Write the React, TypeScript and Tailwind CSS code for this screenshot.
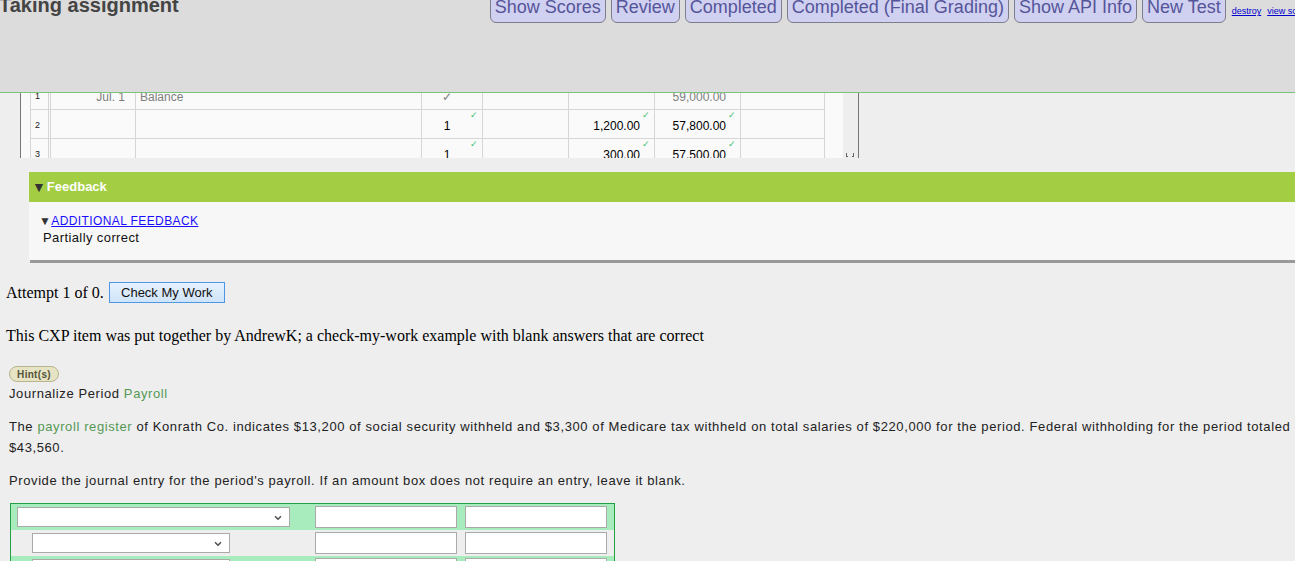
import { ChevronDown } from 'lucide-react';

const sans = 'font-["Liberation_Sans",Arial,sans-serif]';
const serif = 'font-["Liberation_Serif","Times_New_Roman",serif]';
const cellFont = 'font-["Liberation_Sans_Narrow","Liberation_Sans",Arial,sans-serif]';

const navButtons = ['Show Scores', 'Review', 'Completed', 'Completed (Final Grading)', 'Show API Info', 'New Test'];

type Row = {
    n: string;
    date?: string;
    desc?: string;
    post?: string;
    debit?: string;
    credit?: string;
    bal?: string;
    old?: boolean;
};

const ledgerRows: Row[] = [
    { n: '1', date: 'Jul. 1', desc: 'Balance', post: '✓', bal: '59,000.00', old: true },
    { n: '2', post: '1', credit: '1,200.00', bal: '57,800.00' },
    { n: '3', post: '1', credit: '300.00', bal: '57,500.00' },
];

const Tick = () => (
    <span className="absolute right-[4px] top-[1px] text-[9px] leading-none text-[#3cc070]">✓</span>
);

const Cell = ({ w, children, className = '' }: { w: string; children?: React.ReactNode; className?: string }) => (
    <div className={`relative ${w} h-[29px] pt-[3px] shrink-0 border-r border-b border-[#d6d6d6] flex items-center ${className}`}>
        {children}
    </div>
);

const LedgerRow = ({ r }: { r: Row }) => {
    const txt = r.old ? 'text-[#7e7e7e]' : 'text-black';
    return (
        <div className={`flex ${cellFont} text-[12px] ${txt}`}>
            <div className="w-[9px] h-[29px] shrink-0" />
            <Cell w="w-[19px]" className="border-l pl-[4px] text-[9px] text-[#222]">{r.n}</Cell>
            <div className="w-[1px] h-[29px] shrink-0 border-b border-[#d6d6d6]" />
            <Cell w="w-[86px]" className="border-l justify-end pr-[10px]">{r.date}</Cell>
            <Cell w="w-[286px]" className="pl-[4px]">{r.desc}</Cell>
            <Cell w="w-[61px]" className="justify-center pr-[10px]">
                {r.post}
                {!r.old && <Tick />}
            </Cell>
            <Cell w="w-[86px]" className="justify-end pr-[14px]">{r.debit}</Cell>
            <Cell w="w-[86px]" className="justify-end pr-[14px]">
                {r.credit}
                {r.credit && <Tick />}
            </Cell>
            <Cell w="w-[86px]" className="justify-end pr-[14px]">
                {r.bal}
                {!r.old && <Tick />}
            </Cell>
            <Cell w="w-[84px]" />
        </div>
    );
};

const FakeSelect = ({ w }: { w: string }) => (
    <div className={`relative ${w} h-[20px] bg-white border border-[#aaa]`}>
        <ChevronDown className="absolute right-[6px] top-[5px] h-[10px] w-[10px] text-[#555]" strokeWidth={4} />
    </div>
);

const Box = () => <div className="w-[142px] h-[22px] bg-white border border-[#aaa] shrink-0" />;

const EntryRow = ({ green, indent }: { green: boolean; indent: boolean }) => (
    <div className={`flex items-center h-[26px] ${green ? 'bg-[#a8ecbe]' : 'bg-[#eeeeee]'}`}>
        <div className={`w-[304px] shrink-0 ${indent ? 'pl-[21px]' : 'pl-[6px]'}`}>
            <FakeSelect w={indent ? 'w-[198px]' : 'w-[273px]'} />
        </div>
        <Box />
        <div className="w-[8px] shrink-0" />
        <Box />
    </div>
);

const App = () => {
    return (
        <div className={`min-h-screen bg-[#eeeeee] ${sans} overflow-hidden`}>
            {/* top bar */}
            <div className="h-[93px] bg-[#dcdcdc] border-b border-[#7cc47e] flex items-start overflow-hidden whitespace-nowrap">
                <h1 className="mt-[-10px] ml-[-1px] shrink-0 text-[20px] font-bold text-[#444]">Taking assignment</h1>
                <div className="ml-[311px] flex items-start gap-[5px] shrink-0">
                    {navButtons.map((b) => (
                        <div
                            key={b}
                            className="mt-[-8px] h-[31px] pt-[4px] px-[4px] shrink-0 bg-[#d0d0f0] border border-[#7d7d8c] rounded-b-[6px] text-[18px] leading-[21px] text-[#55559a]"
                        >
                            {b}
                        </div>
                    ))}
                    <a className="ml-[1px] mt-[5px] text-[9px] text-[#0000cc] underline">destroy</a>
                    <a className="ml-[1px] mt-[5px] text-[9px] text-[#0000cc] underline">view source</a>
                </div>
            </div>

            {/* scrolled ledger */}
            <div className="ml-[20px] w-[839px] h-[65px] border-l border-r border-[#777] bg-[#fafafa] flex overflow-hidden">
                <div className="w-[822px] shrink-0">
                    <div className="mt-[-12px]">
                        {ledgerRows.map((r) => (
                            <LedgerRow key={r.n} r={r} />
                        ))}
                    </div>
                </div>
                <div className="w-[15px] shrink-0 bg-[#eeeeee] flex items-end justify-center">
                    <svg width="9" height="4" viewBox="0 0 9 4" className="mb-[1px]">
                        <rect x="0" y="0" width="1" height="3" fill="#666" />
                        <rect x="0" y="3" width="2" height="1" fill="#666" />
                        <rect x="7" y="0" width="1" height="3" fill="#666" />
                        <rect x="6" y="3" width="2" height="1" fill="#666" />
                    </svg>
                </div>
            </div>

            {/* feedback */}
            <div className="mt-[14px] ml-[29px] shadow-[1px_3px_0_#999]">
                <div className="h-[30px] bg-[#a3cd43] flex items-center pl-[3px] text-[13px] font-bold text-white">
                    <span className="text-[14px] leading-none text-[#333] mr-[1px]">▼</span>Feedback
                </div>
                <div className="h-[58px] bg-[#f7f7f7] pt-[10px] pl-[10px] text-[13px] tracking-[0.4px]">
                    <div className="flex items-center h-[17px]">
                        <span className="text-[12px] leading-none text-[#333]">▼</span>
                        <a className="text-[12px] text-[#1a0dff] underline">ADDITIONAL FEEDBACK</a>
                    </div>
                    <div className="pl-[4px] leading-[18px] text-[#111]">Partially correct</div>
                </div>
            </div>

            {/* attempt */}
            <div className="mt-[22px] ml-[6px] flex items-center h-[21px]">
                <span className={`${serif} text-[16px] text-black`}>Attempt 1 of 0.</span>
                <button className="ml-[5px] h-[21px] w-[116px] border border-[#4d97e6] bg-gradient-to-b from-[#e6f1fc] to-[#cfe4fa] text-[13px] text-[#111]">
                    Check My Work
                </button>
            </div>

            <p className={`mt-[24px] ml-[6px] ${serif} text-[16px] leading-[18px] text-black`}>
                This CXP item was put together by AndrewK; a check-my-work example with blank answers that are correct
            </p>

            {/* problem */}
            <div className="ml-[9px] text-[13px] text-[#222] tracking-[0.6px]">
                <div className="mt-[21px] h-[16px] w-[50px] rounded-full bg-[#e6e4c4] border border-[#b8b48c] flex items-center justify-center text-[10px] font-bold text-[#55533a] tracking-[0.3px]">
                    Hint(s)
                </div>
                <div className="mt-[4px] leading-[16px]">
                    Journalize Period <span className="text-[#559955]">Payroll</span>
                </div>
                <p className="mt-[14px] leading-[21px] pr-[4px]">
                    The <span className="text-[#559955]">payroll register</span> of Konrath Co. indicates $13,200 of social security withheld and $3,300 of Medicare tax withheld on total salaries of $220,000 for the period. Federal withholding for the period totaled $43,560.
                </p>
                <p className="mt-[12px] leading-[21px]">
                    Provide the journal entry for the period's payroll. If an amount box does not require an entry, leave it blank.
                </p>
            </div>

            <div className="mt-[12px] ml-[10px] w-[605px] border border-[#22a046]">
                <EntryRow green indent={false} />
                <EntryRow green={false} indent />
                <EntryRow green indent />
                <EntryRow green={false} indent />
            </div>
        </div>
    );
};

export default App;
